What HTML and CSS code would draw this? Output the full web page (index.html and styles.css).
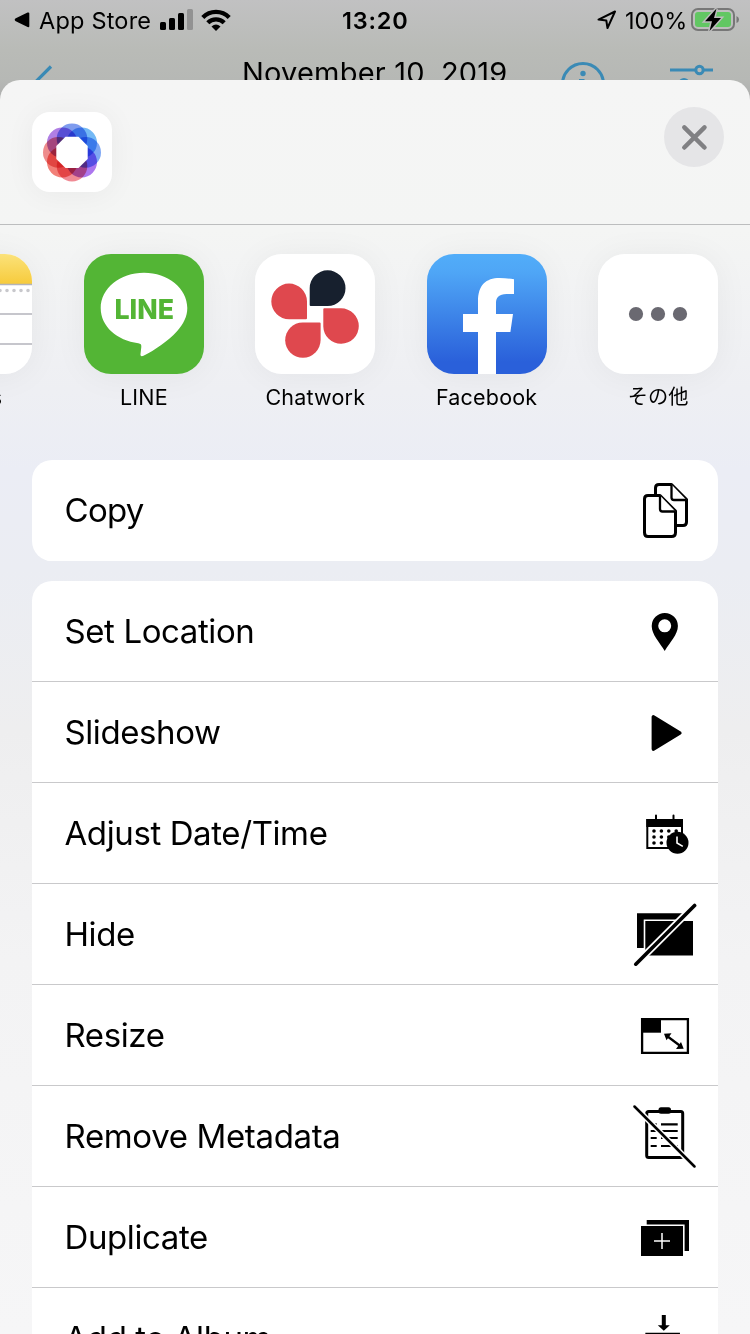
FILE: index.html
```html
<!DOCTYPE html>
<html lang="en">
<head>
<meta charset="utf-8">
<title>Share</title>
<link rel="stylesheet" href="styles.css">
</head>
<body>
<div class="screen">
  <header class="status">
    <svg class="back-app" viewBox="0 0 16 16"><path d="M1.300 6.600 13.600.6q1.700-.5 1.700 1v12.600q0 1.400-1.700.9L1.300 9Q0 7.800 1.300 6.600z"/></svg>
    <span class="status-app">App Store</span>
    <svg class="signal" viewBox="0 0 33 22"><rect y="13" width="6" height="8" rx="1.500"/><rect x="9" y="9" width="6" height="12" rx="1.500"/><rect x="18" y="4" width="6" height="17" rx="1.500"/><rect x="27" width="6" height="21" rx="1.500" fill="#929292"/></svg>
    <svg class="wifi" viewBox="0 0 30 22"><g fill="none" stroke="#000" stroke-width="4.300"><path d="M1.800 8.400a18.600 18.600 0 0 1 26.400 0"/><path d="M6.800 13.800a11.600 11.600 0 0 1 16.400 0"/></g><path d="M10.500 17.400q4.500-3.800 9 0L15 22z"/></svg>
    <span class="status-time">13:20</span>
    <svg class="arrow" viewBox="0 0 20 20"><path d="M1.500 9.600 18 1.500 10.500 18 9.300 10.500z" fill="none" stroke="#000" stroke-width="2" stroke-linejoin="round"/></svg>
    <span class="status-percent">100%</span>
    <svg class="battery" viewBox="0 0 49 26"><rect x="1" y="2" width="42" height="21" rx="6" fill="none" stroke="#777" stroke-width="2"/><path d="M45.500 9q2.500 1 2.500 3.500T45.500 16z" fill="#777"/><rect x="4" y="5" width="36" height="15" rx="3" fill="#62c763"/><path d="M25.500 1.500 14 14.200h7L18.500 24 30 11h-7z" stroke="#bdbdbd" stroke-width="3" paint-order="stroke"/></svg>
  </header>
  <nav class="nav">
    <svg class="nav-back" viewBox="0 0 22 44"><path d="M19 2.500 2 19.500l17 17" fill="none" stroke="#3a8ab5" stroke-width="3.200"/></svg>
    <span class="nav-title">November 10, 2019</span>
    <svg class="nav-info" viewBox="0 0 44 44"><circle cx="22" cy="22" r="20.500" fill="none" stroke="#3a8ab5" stroke-width="3"/><circle cx="22" cy="11.500" r="2.700" fill="#3a8ab5"/><path d="M18 18.500h4V33" fill="none" stroke="#3a8ab5" stroke-width="3"/></svg>
    <svg class="nav-tune" viewBox="0 0 44 44"><g fill="#b7b9b6" stroke="#3a8ab5" stroke-width="3"><path d="M0 8h43M0 22h43"/><circle cx="29.500" cy="8" r="3.700"/><circle cx="14" cy="21.500" r="4"/></g></svg>
  </nav>
  <main class="sheet">
    <div class="sheet-head">
      <svg class="app-badge" viewBox="0 0 80 80">
        <g class="petals">
          <circle cx="40" cy="26.700" r="15.300" fill="#7f9cee"/>
          <circle cx="49.700" cy="30.700" r="15.300" fill="#74b9f5"/>
          <circle cx="53.700" cy="40.400" r="15.300" fill="#7fa8f4"/>
          <circle cx="49.700" cy="50.100" r="15.300" fill="#ac76ee"/>
          <circle cx="40" cy="54.100" r="15.300" fill="#f08a94"/>
          <circle cx="30.300" cy="50.100" r="15.300" fill="#f28078"/>
          <circle cx="26.300" cy="40.400" r="15.300" fill="#ee8c8c"/>
          <circle cx="30.300" cy="30.700" r="15.300" fill="#b07fe4"/>
        </g>
        <path d="M33.500 24.700h13l9.200 9.200v13l-9.200 9.200h-13l-9.200-9.200v-13z" fill="#fff"/>
      </svg>
      <svg class="close" viewBox="0 0 60 60"><circle cx="30" cy="30" r="30" fill="#e5e5e7"/><path d="m20.300 20.300 20.200 20.200m0-20.200L20.300 40.500" stroke="#808083" stroke-width="4.500" stroke-linecap="round"/></svg>
    </div>
    <section class="apps">
      <div class="app">
        <svg class="app-icon" viewBox="0 0 120 120">
          <defs><linearGradient id="notes" x2="0" y2="1"><stop stop-color="#fbe27a"/><stop offset="1" stop-color="#f7cb3c"/></linearGradient></defs>
          <path d="M0 0h120v120H0z" fill="#fff"/><path d="M0 0h120v30H0z" fill="url(#notes)"/><path d="M0 30.500h120" stroke="#b4b4b8" stroke-width="1.500"/>
          <path d="M4 36.500h118" stroke="#c8c8cc" stroke-width="3.600" stroke-linecap="round" stroke-dasharray="0 7"/>
          <path d="M0 60h120M0 90h120" stroke="#c6c6cc" stroke-width="2"/>
        </svg>
        <span class="app-name">Notes</span>
      </div>
      <div class="app">
        <svg class="app-icon" viewBox="0 0 120 120">
          <path d="M0 0h120v120H0z" fill="#53b535"/>
          <path d="M60 18.700c24 0 43.300 15.800 43.300 35.300 0 8.500-3.800 16-10.300 23.200C84 87 71 96 59.500 101.700c-2.200 1-3.300.2-3-1.700l.8-7c.3-2.600-.6-3.400-3-3.800C33 86.500 16.700 72.500 16.700 54 16.700 34.500 36 18.700 60 18.700z" fill="#fff"/>
          <text class="line-mark" x="30.500" y="65" textLength="59.500" lengthAdjust="spacingAndGlyphs">LINE</text>
        </svg>
        <span class="app-name">LINE</span>
      </div>
      <div class="app">
        <svg class="app-icon" viewBox="0 0 120 120">
          <path d="M0 0h120v120H0z" fill="#fff"/>
          <path d="M54.700 51V34.200a17.900 17.900 0 1 1 17.900 17.900H55.700q-1 0-1-1.100z" fill="#17202e"/>
          <g fill="#df484e"><path d="M52 64.300V47.200a17.850 17.850 0 1 0-17.850 18.100H51q1 0 1-1z"/><path d="M64.600 68.400H47.700a17.700 17.700 0 1 0 17.900 17.700V69.400q0-1-1-1z"/><path d="M68.300 55.300v17.100a17.750 17.750 0 1 0 17.750-18.100H69.300q-1 0-1 1z"/></g>
        </svg>
        <span class="app-name">Chatwork</span>
      </div>
      <div class="app">
        <svg class="app-icon" viewBox="0 0 120 120">
          <defs><linearGradient id="blue" x2="0" y2="1"><stop stop-color="#51adf9"/><stop offset=".15" stop-color="#4fa6f6"/><stop offset=".9" stop-color="#2a60da"/></linearGradient></defs>
          <path d="M0 0h120v120H0z" fill="url(#blue)"/>
          <path d="M51 120V78H36V60h15V47.500C51 31 59 24 72.500 24q7.500 0 14.500 1.300V40h-7.500C72 40 69 43.500 69 49v11h17l-2.600 18H69v42z" fill="#fff"/>
        </svg>
        <span class="app-name">Facebook</span>
      </div>
      <div class="app">
        <svg class="app-icon" viewBox="0 0 120 120"><path d="M0 0h120v120H0z" fill="#fff"/><g fill="#6a6971"><circle cx="38" cy="60" r="7.100"/><circle cx="60" cy="60" r="7.100"/><circle cx="82" cy="60" r="7.100"/></g></svg>
        <span class="app-name app-name-ja" lang="ja">その他</span>
      </div>
    </section>
    <section class="group">
      <div class="action"><span class="t-copy">Copy</span>
        <svg viewBox="633 478 64 64"><g fill="#fff" stroke="#000" stroke-width="3" stroke-linejoin="round"><path d="M655.500 495v-7q0-3.500 3.500-3.500h12.500l15 15V522q0 3.500-3.500 3.500h-7"/><path d="M671.500 484.500v13q0 2.500 2.500 2.500h12.500" stroke-width="2.300"/><path d="M648 495.500h12l15.500 15.500v21.500q0 4-4 4H648q-3.500 0-3.500-4V499q0-3.500 3.500-3.500z"/><path d="M660 495.500v13.500q0 2.500 2.500 2.500h13" stroke-width="2.300"/></g></svg>
      </div>
    </section>
    <section class="group">
      <div class="action"><span class="t-location">Set Location</span>
        <svg viewBox="633 599 64 64"><path fill-rule="evenodd" d="M664.700 651c-5-8.500-13-16.500-13-25a13.100 13.100 0 0 1 26.200 0c0 8.500-8.200 16.500-13.200 25zm0-31.700a6.500 6.500 0 1 0 0 13 6.500 6.500 0 0 0 0-13z"/></svg>
      </div>
      <div class="action"><span>Slideshow</span>
        <svg viewBox="633 700 64 64"><path d="M653.500 717v32l26.200-16z" stroke="#000" stroke-width="3.800" stroke-linejoin="round"/></svg>
      </div>
      <div class="action"><span>Adjust Date/Time</span>
        <svg viewBox="633 801 64 64"><path d="M647.300 820h34.700v28h-34.700z" fill="none" stroke="#000" stroke-width="2"/><path d="M646.300 819H683v8h-36.700z"/><path d="M656 815.500v5m17.500-5v5" stroke="#000" stroke-width="2" stroke-linecap="round"/><path d="M654 831h24m-24 6h24m-24 6h24" stroke="#000" stroke-width="3.600" stroke-linecap="round" stroke-dasharray="0 7.400"/><circle cx="677.500" cy="842.700" r="11"/><path d="M677 836.500v6.500l5.800 3.400" fill="none" stroke="#fff" stroke-width="1.600"/></svg>
      </div>
      <div class="action"><span>Hide</span>
        <svg viewBox="633 902 64 64"><path d="M637 913.300h46v34.700h-46z"/><path d="M645.300 921H693v34.500h-47.700z" stroke="#fff" stroke-width="3.200" paint-order="stroke"/><path d="M637 963 694 906" stroke="#fff" stroke-width="7"/><path d="M635.800 964.200 694.600 905.400" stroke="#000" stroke-width="3.600" stroke-linecap="round"/></svg>
      </div>
      <div class="action"><span>Resize</span>
        <svg viewBox="633 1003 64 64"><path d="M642.100 1019.100h45.800v33.800h-45.800z" fill="none" stroke="#000" stroke-width="2.300"/><path d="M641 1018h20v14.700h-20z"/><path d="m667 1036 14 10.500" stroke="#000" stroke-width="2.200"/><path d="m664 1033.700 7.500-.4-5 7zm19.700 15-7.700.300 5-7z"/></svg>
      </div>
      <div class="action"><span class="t-metadata">Remove Metadata</span>
        <svg viewBox="633 1104 64 64"><rect x="646.700" y="1111.500" width="36" height="46" rx="2" fill="none" stroke="#000" stroke-width="3"/><rect x="658.500" y="1107.300" width="12.500" height="6.500" rx="2.500"/><path d="M650.700 1124.300h6m4.300 0h16.700m-27 6.700h6m4.300 0h16.700m-27 7h6m4.300 0h16.700m-27 8h6m4.300 0h16.700" stroke="#000" stroke-width="2.200"/><path d="m636 1108 57 57" stroke="#fff" stroke-width="5.500"/><path d="m634.500 1106.500 60 60" stroke="#000" stroke-width="2.500" stroke-linecap="round"/></svg>
      </div>
      <div class="action"><span>Duplicate</span>
        <svg viewBox="633 1205 64 64"><path d="M646.700 1220H689v31h-42.300z"/><path d="M641 1226h42v30h-42z" stroke="#fff" stroke-width="3.200" paint-order="stroke"/><path d="M662 1233v16m-8-8h16" stroke="#fff" stroke-width="1.500"/></svg>
      </div>
      <div class="action"><span>Add to Album</span>
        <svg viewBox="633 1306 64 64"><path d="M661.800 1315h4v10.200h4l-6 5.500-6-5.500h4z"/><path d="M646 1333.500h33.300V1360H646z" fill="none" stroke="#000" stroke-width="1.300"/></svg>
      </div>
    </section>
  </main>
</div>
</body>
</html>
```
FILE: styles.css
```css
* { box-sizing: border-box; }
body { margin: 0; color: #000; font-family: Inter, "Noto Sans CJK JP", sans-serif; }
svg { display: block; flex: none; }
.screen {
  width: 750px;
  height: 1334px;
  overflow: hidden;
  background: linear-gradient(#c1c1c2, #b9bbb7 50px, #b6b8b5 80px, #adadad 100px);
}
.status {
  display: flex;
  align-items: center;
  height: 40px;
  padding-left: 14px;
  white-space: nowrap;
  font-size: 23.500px;
  line-height: 40px;
}
.status span { flex: none; padding-top: 2px; }
.back-app { width: 16px; height: 16px; }
.status-app { width: 121px; margin-left: 9px; letter-spacing: .2px; }
.signal { width: 33px; height: 22px; margin-top: -1px; }
.wifi { width: 30px; height: 22px; margin-left: 8px; }
.status-time { width: 255px; margin-left: 111px; font-weight: 600; letter-spacing: .8px; }
.arrow { width: 20px; height: 20px; }
.status-percent { width: 66px; margin-left: 8px; }
.battery { width: 49px; height: 26px; }
.nav { display: flex; align-items: flex-start; height: 40px; overflow: hidden; padding-left: 32px; }
.nav-back { width: 22px; height: 44px; margin-top: 24px; }
.nav-title { flex: none; width: 318px; margin-left: 188px; font-size: 29px; letter-spacing: .2px; line-height: 36px; margin-top: 15px; white-space: nowrap; }
.nav-info { width: 44px; height: 44px; margin-top: 22px; margin-left: 1px; }
.nav-tune { width: 44px; height: 44px; margin: 22px 0 0 65px; }
.sheet {
  height: 1254px;
  overflow: hidden;
  border-radius: 20px 20px 0 0;
  background: linear-gradient(#f5f5f5, #f4f5f4 150px, #eeeff3 310px, #ebedf5 390px, #ebedf3 490px, #eeeeef 650px, #f3f3f4 880px, #f6f6f7);
}
.sheet-head {
  display: flex;
  justify-content: space-between;
  align-items: flex-start;
  height: 145px;
  padding: 27px 26px 0 32px;
  border-bottom: 1px solid #bcbdbe;
}
.app-badge { width: 80px; height: 80px; margin-top: 5px; border-radius: 18px; background: #fff; box-shadow: 0 2px 30px rgba(0, 0, 0, .05); }
.petals { isolation: isolate; }
.petals circle { mix-blend-mode: multiply; }
.close { width: 60px; height: 60px; }
.apps { display: flex; gap: 51.400px; height: 235px; padding-top: 29px; margin-left: -87.500px; }
.app { display: flex; flex: none; flex-direction: column; align-items: center; width: 120px; }
.app:first-child { margin: 0 .5px 0 -.5px; }
.app-icon { width: 120px; height: 120px; border-radius: 27px; box-shadow: 0 2px 34px rgba(0, 0, 0, .05); }
.app-name { margin-top: 8px; font-size: 21.500px; line-height: 30px; letter-spacing: .2px; white-space: nowrap; }
.app-name-ja { font-family: "Noto Sans CJK JP", sans-serif; font-size: 20.200px; letter-spacing: 0; line-height: 28px; }
.line-mark { font: 800 27.500px Inter, sans-serif; fill: #53b535; }
.group { margin: 0 32px 20px; overflow: hidden; border-radius: 20px; background: #fff; }
.action {
  display: flex;
  align-items: center;
  justify-content: space-between;
  height: 101px;
  padding: 0 21px 0 32.500px;
  border-bottom: 1px solid #c9c9cb;
  font-size: 33px;
  line-height: 40px;
  letter-spacing: -.4px;
  white-space: nowrap;
}
.t-copy { letter-spacing: -.7px; }
.t-metadata { letter-spacing: -.35px; }
.action:last-child { border-bottom-color: #fff; }
.action svg { width: 64px; height: 64px; }
```
